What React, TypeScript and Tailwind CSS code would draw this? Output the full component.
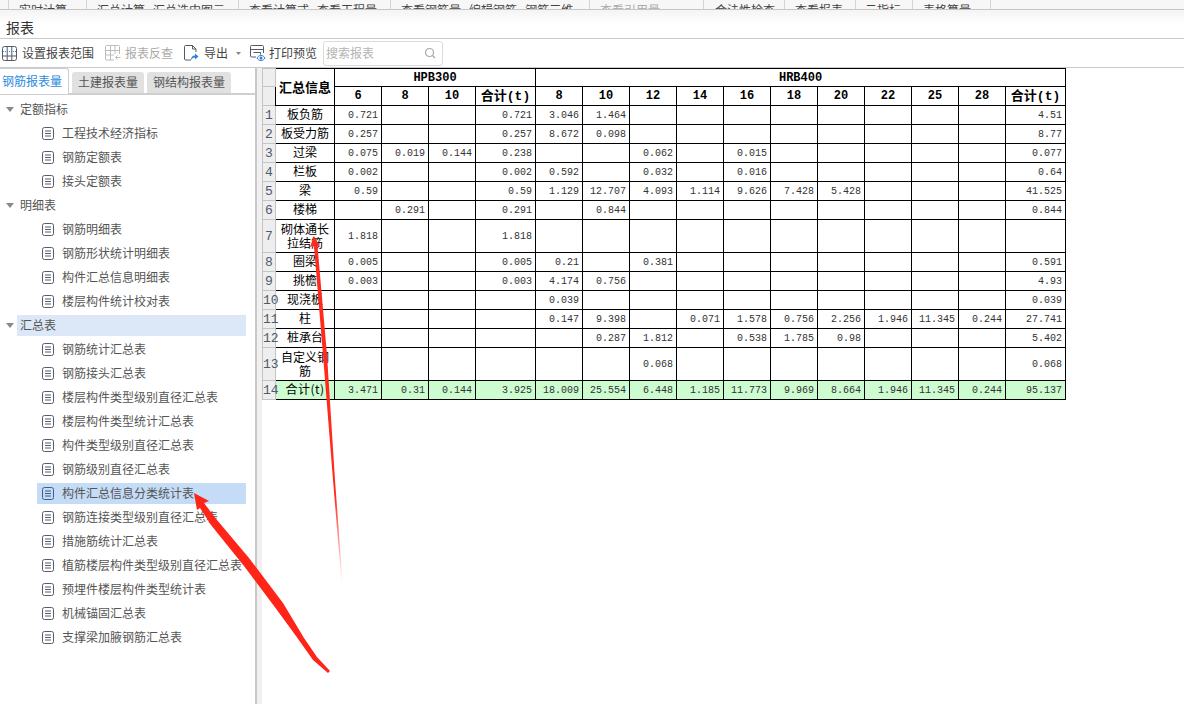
const menuItems = [
  { w: 78, pl: 10, text: '实时计算' },
  { w: 152, pl: 10, text: '汇总计算   汇总选中图元' },
  { w: 152, pl: 10, text: '查看计算式   查看工程量' },
  { w: 199, pl: 10, text: '查看钢筋量   编辑钢筋   钢筋三维' },
  { w: 114, pl: 10, text: '查看引用量', muted: true },
  { w: 81, pl: 11, text: '合法性检查' },
  { w: 71, pl: 10, text: '查看报表' },
  { w: 57, pl: 9, text: '云指标' },
  { w: 78, pl: 10, text: '表格算量' },
];

const tree = [
  { label: '定额指标', items: ['工程技术经济指标', '钢筋定额表', '接头定额表'] },
  { label: '明细表', items: ['钢筋明细表', '钢筋形状统计明细表', '构件汇总信息明细表', '楼层构件统计校对表'] },
  {
    label: '汇总表',
    active: true,
    items: [
      '钢筋统计汇总表',
      '钢筋接头汇总表',
      '楼层构件类型级别直径汇总表',
      '楼层构件类型统计汇总表',
      '构件类型级别直径汇总表',
      '钢筋级别直径汇总表',
      '构件汇总信息分类统计表',
      '钢筋连接类型级别直径汇总表',
      '措施筋统计汇总表',
      '植筋楼层构件类型级别直径汇总表',
      '预埋件楼层构件类型统计表',
      '机械锚固汇总表',
      '支撑梁加腋钢筋汇总表',
    ],
  },
];

const hrbSizes = ['8', '10', '12', '14', '16', '18', '20', '22', '25', '28'];

const rows: { name: string; tall?: boolean; v: string[] }[] = [
  { name: '板负筋', v: ['0.721', '', '', '0.721', '3.046', '1.464', '', '', '', '', '', '', '', '', '4.51'] },
  { name: '板受力筋', v: ['0.257', '', '', '0.257', '8.672', '0.098', '', '', '', '', '', '', '', '', '8.77'] },
  { name: '过梁', v: ['0.075', '0.019', '0.144', '0.238', '', '', '0.062', '', '0.015', '', '', '', '', '', '0.077'] },
  { name: '栏板', v: ['0.002', '', '', '0.002', '0.592', '', '0.032', '', '0.016', '', '', '', '', '', '0.64'] },
  { name: '梁', v: ['0.59', '', '', '0.59', '1.129', '12.707', '4.093', '1.114', '9.626', '7.428', '5.428', '', '', '', '41.525'] },
  { name: '楼梯', v: ['', '0.291', '', '0.291', '', '0.844', '', '', '', '', '', '', '', '', '0.844'] },
  { name: '砌体通长拉结筋', tall: true, v: ['1.818', '', '', '1.818', '', '', '', '', '', '', '', '', '', '', ''] },
  { name: '圈梁', v: ['0.005', '', '', '0.005', '0.21', '', '0.381', '', '', '', '', '', '', '', '0.591'] },
  { name: '挑檐', v: ['0.003', '', '', '0.003', '4.174', '0.756', '', '', '', '', '', '', '', '', '4.93'] },
  { name: '现浇板', v: ['', '', '', '', '0.039', '', '', '', '', '', '', '', '', '', '0.039'] },
  { name: '柱', v: ['', '', '', '', '0.147', '9.398', '', '0.071', '1.578', '0.756', '2.256', '1.946', '11.345', '0.244', '27.741'] },
  { name: '桩承台', v: ['', '', '', '', '', '0.287', '1.812', '', '0.538', '1.785', '0.98', '', '', '', '5.402'] },
  { name: '自定义钢筋', tall: true, v: ['', '', '', '', '', '', '0.068', '', '', '', '', '', '', '', '0.068'] },
];

const totals = ['3.471', '0.31', '0.144', '3.925', '18.009', '25.554', '6.448', '1.185', '11.773', '9.969', '8.664', '1.946', '11.345', '0.244', '95.137'];

const colWidths = [47, 47, 47, 60, 47, 47, 47, 47, 47, 47, 47, 47, 47, 47, 60];

function DocIcon({ blue }: { blue?: boolean }) {
  const c = blue ? '#3b5f8a' : '#555b66';
  return (
    <svg width="12" height="13" viewBox="0 0 12 13" fill="none" stroke={c} strokeWidth="1">
      <rect x="0.5" y="0.5" width="11" height="12" rx="2" />
      <path d="M3 4h6M3 6.5h6M3 9h6" />
    </svg>
  );
}

function Caret() {
  return (
    <svg width="8" height="5" viewBox="0 0 8 5" className="shrink-0">
      <path d="M0 0h8L4 5z" fill="#8a8a8a" />
    </svg>
  );
}

function Toolbar() {
  return (
    <div className="h-[29px] border-b border-[#c9c9ce] bg-white flex items-center text-[12px] text-[#444] pl-[2px]">
      <svg width="15" height="15" viewBox="0 0 15 15" fill="none" className="shrink-0">
        <rect x="0.5" y="0.5" width="14" height="14" rx="2" stroke="#555b66" />
        <path d="M5.2 1v13M9.8 1v13" stroke="#555b66" />
        <path d="M1 5.5h13" stroke="#2f8fe6" strokeDasharray="1 1" />
        <path d="M1 10h13" stroke="#555b66" />
      </svg>
      <span className="ml-[5px]">设置报表范围</span>
      <svg width="16" height="16" viewBox="0 0 16 16" fill="none" stroke="#bdbdbd" className="ml-[11px] shrink-0">
        <path d="M9 15H1.5a1 1 0 0 1-1-1V1.5a1 1 0 0 1 1-1h12a1 1 0 0 1 1 1V9" />
        <path d="M5.5 1v14M10 1v8M1 5.5h13M1 10h8" />
        <path d="M15.5 12.5h-5M12.5 10.5l-2.2 2 2.2 2" />
      </svg>
      <span className="ml-[4px] text-[#aaa]">报表反查</span>
      <svg width="16" height="16" viewBox="0 0 16 16" fill="none" className="ml-[10px] shrink-0">
        <path d="M8 15H2.5a1 1 0 0 1-1-1V1.5a1 1 0 0 1 1-1h7l3.5 3.5v3" stroke="#555b66" />
        <path d="M9.5 0.5v3.5H13" stroke="#555b66" />
        <path d="M8 15c0-3 1.500-4.500 4-4.500V8.500L15.500 11.500 12 14.500v-2c-1.500 0-3 .8-4 2.500z" fill="#2f7fd6" />
      </svg>
      <span className="ml-[5px]">导出</span>
      <svg width="5" height="3" viewBox="0 0 5 3" className="ml-[8px] shrink-0">
        <path d="M0 0h5L2.500 3z" fill="#888" />
      </svg>
      <svg width="17" height="17" viewBox="0 0 17 17" fill="none" className="ml-[8px] shrink-0">
        <path d="M7 12H2.500a1 1 0 0 1-1-1V1.500a1 1 0 0 1 1-1h11a1 1 0 0 1 1 1V8" stroke="#555b66" />
        <path d="M1.500 4.500h13M4.500 7.500h7v2" stroke="#555b66" />
        <path d="M8 13c1-1.700 2.300-2.500 4-2.500s3 .8 4 2.500c-1 1.700-2.300 2.500-4 2.500S9 14.700 8 13z" stroke="#2f7fd6" />
        <circle cx="12" cy="13" r="1.500" fill="#2f7fd6" />
      </svg>
      <span className="ml-[3px]">打印预览</span>
      <div className="ml-[6px] w-[120px] h-[25px] border border-[#dcdcdc] rounded-[3px] flex items-center justify-between pl-[2px] pr-[6px] text-[#b4b4b4]">
        <span>搜索报表</span>
        <svg width="12" height="12" viewBox="0 0 12 12" fill="none" stroke="#a8a8a8" strokeWidth="1.200">
          <circle cx="5.500" cy="5.500" r="4" />
          <path d="M8.500 8.500l2.500 2.500" />
        </svg>
      </div>
    </div>
  );
}

function Sidebar() {
  return (
    <aside className="w-[257px] shrink-0 flex flex-col border-r-2 border-[#c8c8c8] text-[12px] text-[#555]">
      <div className="h-[25px] flex items-end shrink-0 relative">
        <div className="w-[69px] h-[26px] -mb-[1px] bg-white border-t border-r border-[#cfcfcf] rounded-tr-[3px] pl-[2px] pt-[3px] text-[#2b8be0] z-10">钢筋报表量</div>
        <div className="ml-[3px] w-[72px] h-[21px] bg-[#e1e1e1] rounded-t-[3px] pl-[6px] pt-[1px]">土建报表量</div>
        <div className="ml-[3px] w-[84px] h-[21px] bg-[#e1e1e1] rounded-t-[3px] pl-[6px] pt-[1px]">钢结构报表量</div>
      </div>
      <div className="flex-1 border-t-2 border-[#cfcfcf] pt-[2px] pr-[9px] bg-white">
        {tree.map((group) => (
          <div key={group.label}>
            <div className="h-[24px] flex items-center pl-[6px]">
              <Caret />
              <div className={`ml-[3px] flex-1 h-[21px] flex items-center pl-[3px] ${group.active ? 'bg-[#dce7f7]' : ''}`}>{group.label}</div>
            </div>
            {group.items.map((item) => {
              const selected = item === '构件汇总信息分类统计表';
              return (
                <div key={item} className="h-[24px] flex items-center pl-[37px]">
                  <div className={`flex-1 h-[21px] flex items-center pl-[5px] whitespace-nowrap ${selected ? 'bg-[#c5dcf7]' : ''}`}>
                    <DocIcon blue={selected} />
                    <span className="ml-[8px]">{item}</span>
                  </div>
                </div>
              );
            })}
          </div>
        ))}
      </div>
    </aside>
  );
}

function RowNo({ n }: { n?: number }) {
  return <td className="border border-[#c4c4c4] bg-[#eeeeee] text-[#4d5a6b] text-[13px] text-center p-0 leading-none">{n}</td>;
}

function SummaryTable() {
  return (
    <table className="table-fixed border-collapse w-[803px] h-fit text-[12px] text-black [font-family:'Liberation_Mono','Noto_Sans_CJK_SC',monospace]">
      <colgroup>
        <col className="w-[13px]" />
        <col className="w-[59px]" />
        {colWidths.map((w, i) => (
          <col key={i} style={{ width: w }} />
        ))}
      </colgroup>
      <tbody>
        <tr className="h-[18px]">
          <RowNo />
          <td rowSpan={2} className="border border-black p-0 pb-[2px] text-center font-bold text-[13px] leading-none [font-family:'Noto_Sans_CJK_SC',sans-serif]">汇总信息</td>
          <td colSpan={4} className="border border-black p-0 text-center font-bold text-[12px] leading-none">HPB300</td>
          <td colSpan={11} className="border border-black p-0 text-center font-bold text-[12px] leading-none">HRB400</td>
        </tr>
        <tr className="h-[19px]">
          <RowNo />
          {['6', '8', '10'].map((s) => (
            <td key={s} className="border border-black p-0 text-center font-bold text-[12px] leading-none">{s}</td>
          ))}
          <td className="border border-black p-0 text-center font-bold text-[13px] leading-none">合计(t)</td>
          {hrbSizes.map((s) => (
            <td key={s} className="border border-black p-0 text-center font-bold text-[12px] leading-none">{s}</td>
          ))}
          <td className="border border-black p-0 text-center font-bold text-[13px] leading-none">合计(t)</td>
        </tr>
        {rows.map((row, i) => (
          <tr key={row.name} className={row.tall ? 'h-[33px]' : 'h-[19px]'}>
            <RowNo n={i + 1} />
            <td className={`border border-black p-0 text-center text-[12px] [font-family:'Noto_Sans_CJK_SC',sans-serif] ${row.tall ? 'leading-[14px]' : 'pb-[3px] leading-[15px]'}`}>{row.name}</td>
            {row.v.map((val, j) => (
              <td key={j} className="border border-black p-0 pt-[1px] pr-[3px] text-right text-[10px] leading-none text-[#333]">{val}</td>
            ))}
          </tr>
        ))}
        <tr className="h-[19px] bg-[#ccfccf]">
          <RowNo n={14} />
          <td className="border border-black p-0 pb-[3px] text-center text-[12px] leading-none tracking-[0.5px] [font-family:'Noto_Sans_CJK_SC',sans-serif]">合计(t)</td>
          {totals.map((val, j) => (
            <td key={j} className="border border-black p-0 pt-[1px] pr-[3px] text-right text-[10px] leading-none text-[#333]">{val}</td>
          ))}
        </tr>
      </tbody>
    </table>
  );
}

// 截图上手画的两个红色箭头
function RedArrows() {
  return (
    <svg width="1184" height="704" viewBox="0 0 1184 704" className="absolute left-0 top-0 pointer-events-none">
      <defs>
        <linearGradient id="fade" x1="0" y1="0" x2="0" y2="1">
          <stop offset="0" stopColor="#ff2a1c" />
          <stop offset="0.75" stopColor="#ff2a1c" />
          <stop offset="1" stopColor="#ff2a1c" stopOpacity="0" />
        </linearGradient>
      </defs>
      <path d="M314 236 L320 247 L317.500 246 L327 355 L335 480 L342.500 582 L341.500 582 L333 480 L323 355 L314 246 L310 247 Z" fill="url(#fade)" />
      <path
        d="M194 493 L209 501 L204 503 L217 520 L249 558 L283 603 L304 638 L317 657 L330 671 L328 673 L313 660 L296 636 L277 610 L244 566 L211 525 L200 508 L197 510 Z"
        fill="#ff2418"
      />
    </svg>
  );
}

export default function App() {
  return (
    <div className="relative w-[1184px] h-[704px] overflow-hidden bg-white [font-family:'Noto_Sans_CJK_SC','Liberation_Sans',sans-serif]">
      <div className="h-[10px] flex pl-[8px] bg-[#f7f7f7] border-b border-[#c6c6c6] overflow-hidden text-[12px] leading-[16px] text-[#444]">
        {menuItems.map((m) => (
          <div
            key={m.text}
            className={`shrink-0 h-[16px] border-l border-[#d4d4d4] pt-[2px] whitespace-pre ${m.muted ? 'text-[#aaa]' : ''}`}
            style={{ width: m.w, paddingLeft: m.pl }}
          >
            {m.text}
          </div>
        ))}
        <div className="border-l border-[#d4d4d4] h-[16px]" />
      </div>
      <div className="h-[29px] border-b border-[#c9c9ce] bg-gradient-to-b from-[#f4f4f4] via-white to-white pl-[6px] flex items-end text-[14px] text-[#333]">报表</div>
      <Toolbar />
      <div className="flex h-[636px]">
        <Sidebar />
        <div className="w-[5px] shrink-0 bg-[#f0f0f0]" />
        <SummaryTable />
      </div>
      <RedArrows />
    </div>
  );
}
